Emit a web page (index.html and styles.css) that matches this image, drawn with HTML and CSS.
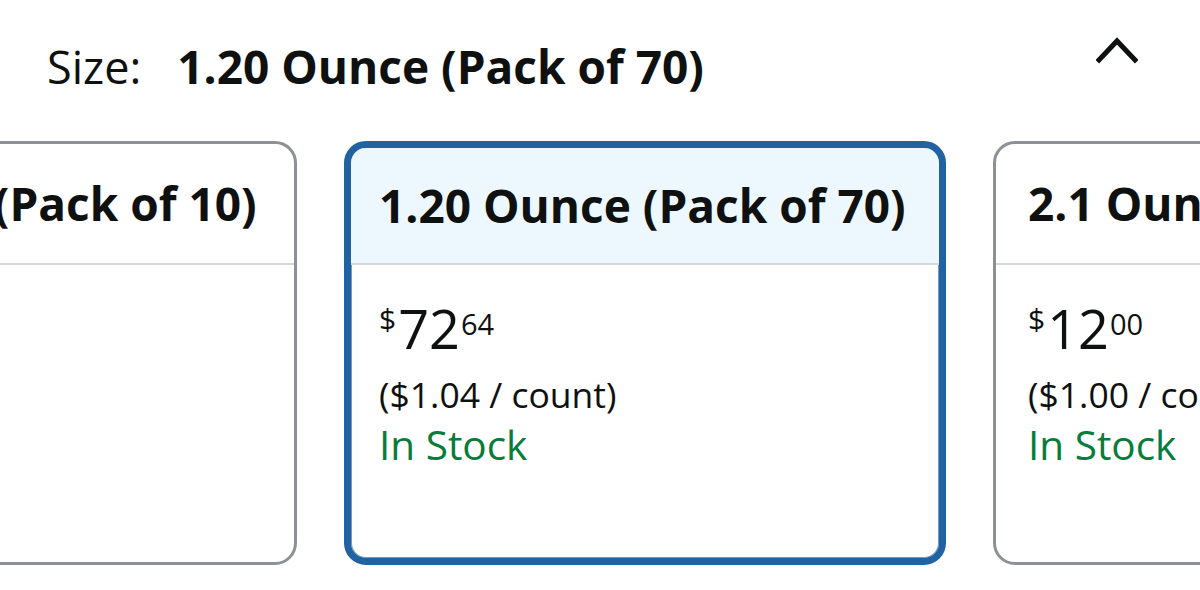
FILE: index.html
```html
<!DOCTYPE html>
<html lang="en">
<head>
<meta charset="utf-8">
<title>Size options</title>
<link rel="stylesheet" href="styles.css">
</head>
<body>
<section class="variation">
  <header class="variation-bar">
    <div class="variation-label">
      <span class="label-key">Size:</span>
      <span class="label-value">1.20 Ounce (Pack of 70)</span>
    </div>
    <button class="collapse" aria-label="Collapse sizes">
      <svg width="42" height="28" viewBox="0 0 42 28" aria-hidden="true">
        <polyline points="3,24 21,5 39,24" fill="none" stroke="#0f1111" stroke-width="5" stroke-linecap="square" stroke-linejoin="miter"/>
      </svg>
    </button>
  </header>

  <div class="swatch-viewport">
    <ul class="swatch-track">
      <li class="swatch">
        <div class="swatch-head">1.20 Ounce (Pack of 10)</div>
        <div class="swatch-body"></div>
      </li>
      <li class="swatch swatch--selected">
        <div class="swatch-head">1.20 Ounce (Pack of 70)</div>
        <div class="swatch-body">
          <div class="price"><span class="price-symbol">$</span><span class="price-whole">72</span><span class="price-fraction">64</span></div>
          <div class="unit-price">($1.04 / count)</div>
          <div class="availability">In Stock</div>
        </div>
      </li>
      <li class="swatch">
        <div class="swatch-head">2.1 Ounce (Pack of 12)</div>
        <div class="swatch-body">
          <div class="price"><span class="price-symbol">$</span><span class="price-whole">12</span><span class="price-fraction">00</span></div>
          <div class="unit-price">($1.00 / count)</div>
          <div class="availability">In Stock</div>
        </div>
      </li>
    </ul>
  </div>
</section>
</body>
</html>
```

FILE: styles.css
```css
* {
  box-sizing: border-box;
}

html, body {
  margin: 0;
  background: #ffffff;
}

body {
  font-family: "Open Sans", "Noto Sans", "Liberation Sans", sans-serif;
  color: #0f1111;
  width: 1200px;
  height: 590px;
  overflow: hidden;
}

/* Top bar: current size + collapse toggle */
.variation-bar {
  display: flex;
  align-items: center;
  justify-content: space-between;
  height: 134px;
  padding: 0 62px 0 47px;
}

.variation-label {
  display: flex;
  align-items: baseline;
  gap: 36px;
  line-height: 1;
  padding-bottom: 2px;
}

.label-key {
  font-size: 45px;
  font-weight: 400;
}

.label-value {
  font-size: 46px;
  font-weight: 700;
}

.collapse {
  align-self: flex-start;
  margin-top: 36px;
  border: 0;
  background: none;
  padding: 0;
  display: flex;
}

/* Swatch carousel */
.swatch-viewport {
  overflow: hidden;
  padding-top: 7px;
}

.swatch-track {
  list-style: none;
  margin: 0 0 0 -305px;
  padding: 0;
  display: flex;
  gap: 47px;
}

.swatch {
  flex: none;
  width: 602px;
  height: 424px;
  display: flex;
  flex-direction: column;
  border: 3px solid #8d9096;
  border-radius: 22px;
  overflow: hidden;
  background: #ffffff;
}

.swatch-head {
  height: 121px;
  display: flex;
  align-items: center;
  padding: 0 32px 2px;
  border-bottom: 2px solid #d5d9d9;
  font-size: 46px;
  font-weight: 700;
  line-height: 1;
  white-space: nowrap;
}

.swatch--selected {
  border: 7px solid #2162a1;
  box-shadow: inset 0 0 0 1px #6f9bc8;
}

.swatch--selected .swatch-head {
  height: 117px;
  padding: 0 28px 2px;
  background: #edf7fe;
}

.swatch-body {
  flex: 1;
  padding: 36px 32px 0;
}

.swatch--selected .swatch-body {
  padding: 36px 28px 0;
}

.price {
  display: flex;
  align-items: flex-start;
  line-height: 1;
}

.price-symbol {
  font-size: 30px;
  margin-top: 3px;
  margin-right: 2px;
}

.price-whole {
  font-size: 54px;
}

.price-fraction {
  font-size: 29px;
  margin-top: 8px;
  margin-left: 1px;
}

.unit-price {
  font-size: 35.5px;
  line-height: 1.2;
  margin-top: 18px;
}

.availability {
  font-size: 40.5px;
  line-height: 1.2;
  margin-top: 5px;
  color: #087c3b;
}
```
